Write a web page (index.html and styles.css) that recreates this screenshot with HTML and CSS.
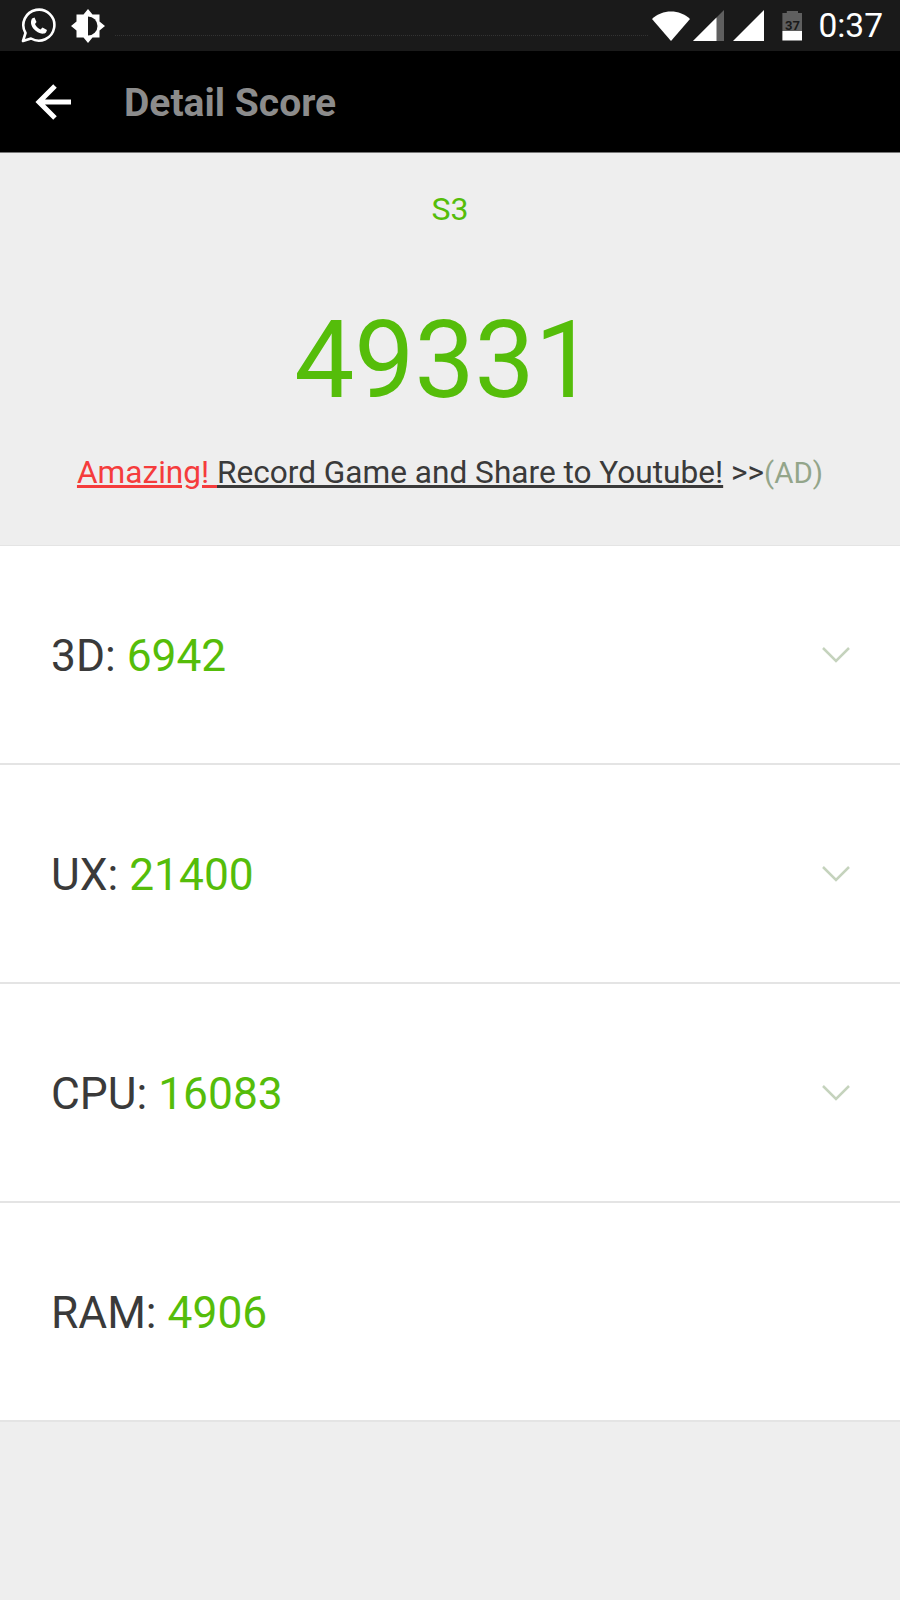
FILE: index.html
```html
<!DOCTYPE html>
<html lang="en">
<head>
    <meta charset="UTF-8">
    <meta name="viewport" content="width=device-width, initial-scale=1.0">
    <title>Detail Score</title>
    <link rel="stylesheet" href="styles.css">
</head>
<body>
    <section class="status-bar">
        <div class="status-left">
            <svg class="icon-whatsapp" width="36" height="36" viewBox="0 0 36 36">
                <path d="M3 33 L5.5 25 A15.5 15.5 0 1 1 11 30.5 Z" fill="none" stroke="#fff" stroke-width="2.6" stroke-linejoin="round"/>
                <path d="M12 10.5 L14.5 9.5 L16.5 14 L15 16 C16 18.5 18 20.5 20.5 21.5 L22.5 19.5 L27 22 L26 24.5 C24 26.5 20 26 16 23 C12 20 9.5 15 12 10.5 Z" fill="#fff"/>
            </svg>
            <svg class="icon-brightness" width="34" height="34" viewBox="0 0 34 34">
                <path d="M17 0 L21.5 5.5 L28.5 5.5 L28.5 12.5 L34 17 L28.5 21.5 L28.5 28.5 L21.5 28.5 L17 34 L12.5 28.5 L5.5 28.5 L5.5 21.5 L0 17 L5.5 12.5 L5.5 5.5 L12.5 5.5 Z" fill="#fff"/>
                <path d="M17 7.5 A9.5 9.5 0 0 1 17 26.5 Z" fill="#1a1a1a"/>
            </svg>
        </div>
        <div class="status-dots"></div>
        <div class="status-right">
            <svg class="icon-wifi" width="38" height="32" viewBox="0 0 38 32">
                <path d="M0 9 C10 -1 28 -1 38 9 L19 31 Z" fill="#fff"/>
            </svg>
            <svg class="icon-signal" width="31" height="32" viewBox="0 0 31 32">
                <path d="M0 31 L31 0 L31 31 Z" fill="#5f5f5f"/>
                <path d="M0 31 L23.5 7.5 L23.5 31 Z" fill="#fff"/>
            </svg>
            <svg class="icon-signal" width="31" height="32" viewBox="0 0 31 32">
                <path d="M0 31 L31 0 L31 31 Z" fill="#fff"/>
            </svg>
            <div class="battery">
                <span class="battery-level">37</span>
            </div>
            <span class="clock">0:37</span>
        </div>
    </section>
    <header class="app-bar">
        <svg class="icon-back" width="36" height="36" viewBox="0 0 36 36">
            <path d="M36 18 L4 18 M20 2 L4 18 L20 34" fill="none" stroke="#fff" stroke-width="5"/>
        </svg>
        <h1>Detail Score</h1>
    </header>
    <main>
        <section class="summary">
            <div class="device">S3</div>
            <div class="total">49331</div>
            <div class="promo"><a href="#"><span class="promo-red">Amazing! </span><span class="promo-link">Record Game and Share to Youtube!</span></a> &gt;&gt;<span class="promo-ad">(AD)</span></div>
        </section>
        <section class="scores">
            <div class="score-row">
                <span class="score-label">3D: <b>6942</b></span>
                <svg class="chevron" width="28" height="16" viewBox="0 0 28 16"><path d="M1 1 L14 14 L27 1"/></svg>
            </div>
            <div class="score-row">
                <span class="score-label">UX: <b>21400</b></span>
                <svg class="chevron" width="28" height="16" viewBox="0 0 28 16"><path d="M1 1 L14 14 L27 1"/></svg>
            </div>
            <div class="score-row">
                <span class="score-label">CPU: <b>16083</b></span>
                <svg class="chevron" width="28" height="16" viewBox="0 0 28 16"><path d="M1 1 L14 14 L27 1"/></svg>
            </div>
            <div class="score-row">
                <span class="score-label">RAM: <b>4906</b></span>
            </div>
        </section>
    </main>
</body>
</html>
```

FILE: styles.css
```css
body{
    margin: 0;
    width: 900px;
    height: 1600px;
    overflow: hidden;
    font-family: Roboto, "Liberation Sans", sans-serif;
    background-color: #eeeeee;
}

.status-bar{
    height: 51px;
    background-color: #1a1a1a;
    display: flex;
    align-items: center;
    padding: 0 17px 0 20px;
    box-sizing: border-box;
}

.status-left{
    display: flex;
    align-items: center;
    gap: 15px;
}

/* faint dotted line that runs behind the notifications */
.status-dots{
    flex: 1;
    margin: 19px 4px 0 10px;
    border-top: 1px dotted #333;
}

.status-right{
    display: flex;
    align-items: center;
}

.icon-wifi{
    margin-right: 3px;
}

.icon-signal{
    margin-right: 9px;
}

.battery{
    width: 20px;
    height: 30px;
    margin: 0 16px 0 9px;
    background: linear-gradient(#5f5f5f 66%, #fff 66%);
    clip-path: polygon(0 8%, 22% 8%, 22% 0, 78% 0, 78% 8%, 100% 8%, 100% 100%, 0 100%);
    font-size: 13px;
    font-weight: 700;
    color: #1a1a1a;
    text-align: center;
    line-height: 30px;
}

.clock{
    color: #fff;
    font-size: 33.5px;
}

.app-bar{
    height: 101px;
    background-color: #000;
    border-bottom: 1px solid #777;
    display: flex;
    align-items: center;
    padding-left: 35px;
}

.app-bar h1{
    margin: 3px 0 0 53px;
    font-size: 39px;
    font-weight: 700;
    color: #8c8c8c;
}

.summary{
    height: 392px;
    text-align: center;
    box-sizing: border-box;
    padding-top: 37px;
}

.device{
    font-size: 32px;
    line-height: 38px;
    color: #55bd0a;
}

.total{
    font-size: 107px;
    line-height: 132px;
    margin-top: 67px;
    padding-right: 11px;
    color: #55bd0a;
}

.promo{
    font-size: 31.6px;
    line-height: 38px;
    margin-top: 27px;
    color: #3a3a3a;
}

.promo a{
    color: #3a3a3a;
    text-decoration: none;
}

.promo-link{
    text-decoration: underline;
}

.promo-red{
    color: #f53c3c;
    text-decoration: underline;
}

.promo-ad{
    font-size: 29.5px;
    color: #93a58a;
}

.scores{
    background-color: #fff;
    border-top: 1px solid #e4e4e4;
}

.score-row{
    height: 217px;
    border-bottom: 2px solid #e4e4e4;
    display: flex;
    justify-content: space-between;
    align-items: center;
    padding: 0 50px 0 51px;
    font-size: 44.3px;
    color: #3a3a3a;
}

.score-label{
    padding-top: 2px;
}

.score-row b{
    font-weight: 400;
    color: #55bd0a;
}

.chevron{
    fill: none;
    stroke: #c5d3bd;
    stroke-width: 2.5;
}
```
